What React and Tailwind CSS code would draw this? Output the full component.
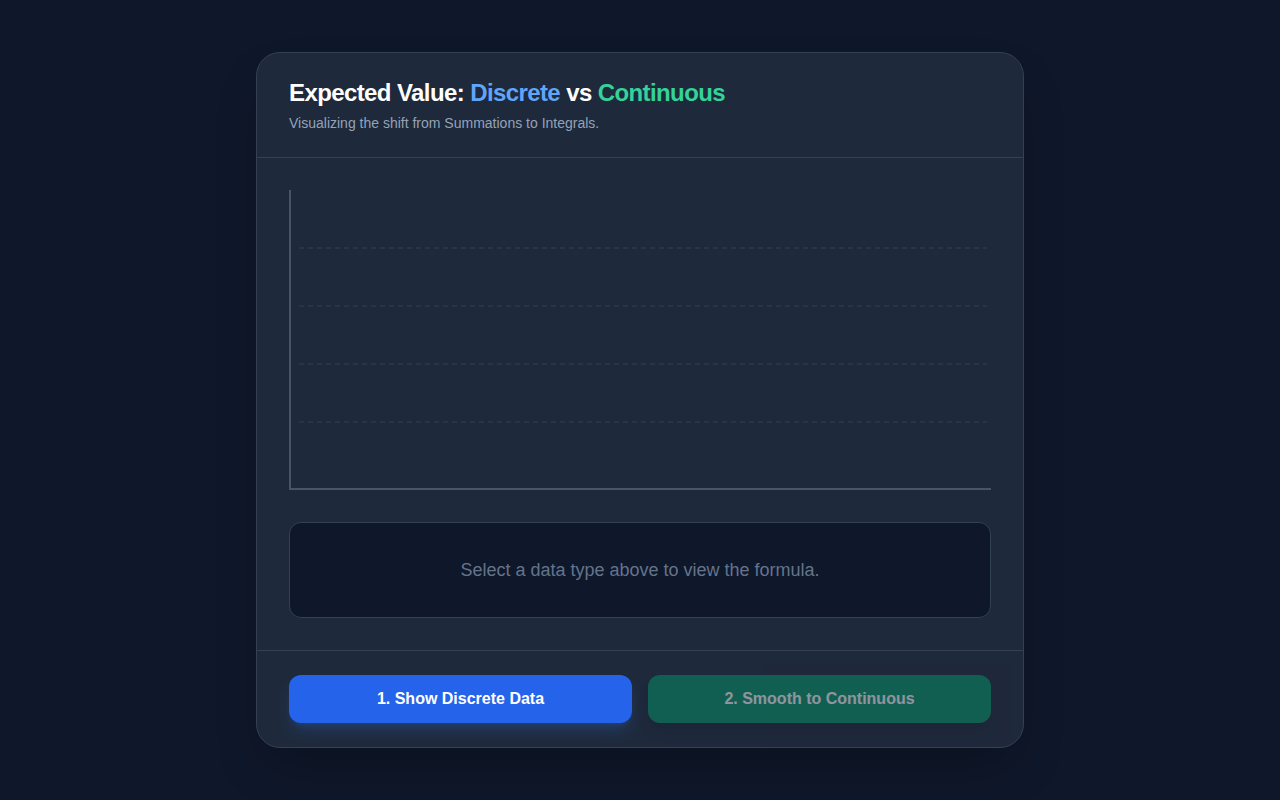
export default function App() {
  const grid = [58, 116, 174, 232];
  return (
    <div className="min-h-screen w-full bg-[#0f172a] flex items-center justify-center" style={{ fontFamily: '"Liberation Sans", Arial, sans-serif' }}>
      <div className="w-[768px] bg-[#1e293b] border border-[#334155] rounded-3xl shadow-2xl overflow-hidden">
        <div className="px-8 py-6 border-b border-[#334155]">
          <h1 className="text-2xl font-bold text-white tracking-tight">
            Expected Value: <span className="text-[#60a5fa]">Discrete</span> vs <span className="text-[#34d399]">Continuous</span>
          </h1>
          <p className="text-sm text-[#94a3b8] mt-1">Visualizing the shift from Summations to Integrals.</p>
        </div>
        <div className="p-8">
          <svg width="702" height="300" viewBox="0 0 702 300" className="block">
            {grid.map((y) => (
              <line key={y} x1="10" x2="698" y1={y} y2={y} stroke="#334155" strokeWidth="1" strokeDasharray="5 4" />
            ))}
            <line x1="1" x2="1" y1="0" y2="300" stroke="#475569" strokeWidth="2" />
            <line x1="0" x2="702" y1="299" y2="299" stroke="#475569" strokeWidth="2" />
          </svg>
          <div className="mt-8 h-24 bg-[#0f172a] border border-[#334155] rounded-xl flex items-center justify-center">
            <p className="text-lg text-[#64748b]">Select a data type above to view the formula.</p>
          </div>
        </div>
        <div className="px-8 py-6 border-t border-[#334155] grid grid-cols-2 gap-4">
          <button className="h-12 rounded-xl bg-[#2563eb] text-white font-bold text-base shadow-lg shadow-blue-500/20">1. Show Discrete Data</button>
          <button disabled className="h-12 rounded-xl bg-[#059669] text-white font-bold text-base opacity-50 shadow-lg">2. Smooth to Continuous</button>
        </div>
      </div>
    </div>
  );
}
